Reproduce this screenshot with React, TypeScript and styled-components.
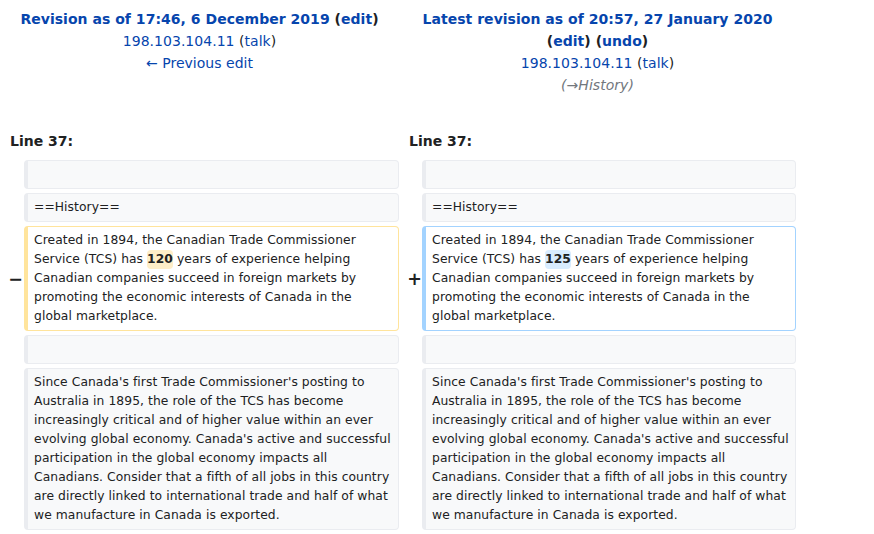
import styled, { createGlobalStyle } from 'styled-components';

const GlobalStyle = createGlobalStyle`
  body {
    margin: 0;
    background: #ffffff;
    font-family: "DejaVu Sans", "Liberation Sans", sans-serif;
    color: #202122;
  }
`;

const Page = styled.div`
  padding-top: 8px;
  width: 796px;
`;

const HeaderRow = styled.div`
  display: grid;
  grid-template-columns: 399px 397px;
`;

const HeaderCell = styled.div`
  text-align: center;
  font-size: 14px;
  line-height: 22px;
  letter-spacing: 0.03px;
`;

const HeaderLine = styled.div<{ $bold?: boolean }>`
  font-weight: ${p => (p.$bold ? 700 : 400)};
`;

const Link = styled.a`
  color: #0645ad;
  text-decoration: none;
`;

const Summary = styled.div`
  font-style: italic;
  color: #72777d;
`;

const LineNoRow = styled.div`
  display: grid;
  grid-template-columns: 399px 397px;
  margin-top: 34px;
  margin-bottom: 8px;
`;

const LineNo = styled.div`
  padding-left: 10px;
  font-size: 14px;
  line-height: 22px;
  font-weight: 700;
`;

const DiffGrid = styled.div`
  display: grid;
  grid-template-columns: 24px 375px 23px 374px;
  row-gap: 4px;
`;

const Marker = styled.div<{ $pad: number }>`
  align-self: center;
  text-align: right;
  padding-right: ${p => p.$pad}px;
  font-size: 17.5px;
  font-weight: 700;
  line-height: 20px;
`;

const borderColors = {
  context: '#eaecf0',
  deleted: '#ffe49c',
  added: '#a3d3ff',
};

const Cell = styled.div<{ $kind: 'context' | 'deleted' | 'added'; $col: number }>`
  grid-column: ${p => p.$col};
  box-sizing: border-box;
  border-style: solid;
  border-width: 1px 1px 1px 4px;
  border-color: ${p => borderColors[p.$kind]};
  border-radius: 4px;
  background: ${p => (p.$kind === 'context' ? '#f8f9fa' : '#ffffff')};
  padding: 4px 5px 4px 6px;
  font-size: 12.32px;
  line-height: 19px;
  letter-spacing: 0.07px;
  min-height: 29px;
  white-space: pre-wrap;
  word-wrap: break-word;
`;

const Change = styled.span<{ $kind: 'deleted' | 'added' }>`
  display: inline-block;
  font-weight: 700;
  border-radius: 4px;
  line-height: 19px;
  background: ${p => (p.$kind === 'deleted' ? '#feeec8' : '#d8ecff')};
`;

const intro = (n: string, kind: 'deleted' | 'added') => (
  <>
    Created in 1894, the Canadian Trade Commissioner Service (TCS) has{' '}
    <Change $kind={kind}>{n}</Change> years of experience helping Canadian companies succeed in
    foreign markets by promoting the economic interests of Canada in the global marketplace.
  </>
);

const since =
  "Since Canada's first Trade Commissioner's posting to Australia in 1895, the role of the TCS has become increasingly critical and of higher value within an ever evolving global economy. Canada's active and successful participation in the global economy impacts all Canadians. Consider that a fifth of all jobs in this country are directly linked to international trade and half of what we manufacture in Canada is exported.";

export default function App() {
  return (
    <Page>
      <GlobalStyle />
      <HeaderRow>
        <HeaderCell>
          <HeaderLine $bold>
            <Link>Revision as of 17:46, 6 December 2019</Link> (<Link>edit</Link>)
          </HeaderLine>
          <HeaderLine>
            <Link>198.103.104.11</Link> (<Link>talk</Link>)
          </HeaderLine>
          <HeaderLine>
            <Link>← Previous edit</Link>
          </HeaderLine>
        </HeaderCell>
        <HeaderCell>
          <HeaderLine $bold>
            <Link>Latest revision as of 20:57, 27 January 2020</Link>
          </HeaderLine>
          <HeaderLine $bold>
            (<Link>edit</Link>) (<Link>undo</Link>)
          </HeaderLine>
          <HeaderLine>
            <Link>198.103.104.11</Link> (<Link>talk</Link>)
          </HeaderLine>
          <Summary>(→History)</Summary>
        </HeaderCell>
      </HeaderRow>

      <LineNoRow>
        <LineNo>Line 37:</LineNo>
        <LineNo>Line 37:</LineNo>
      </LineNoRow>

      <DiffGrid>
        <Cell $kind="context" $col={2} />
        <Cell $kind="context" $col={4} />

        <Cell $kind="context" $col={2}>==History==</Cell>
        <Cell $kind="context" $col={4}>==History==</Cell>

        <Marker $pad={1}>−</Marker>
        <Cell $kind="deleted" $col={2}>{intro('120', 'deleted')}</Cell>
        <Marker $pad={0}>+</Marker>
        <Cell $kind="added" $col={4}>{intro('125', 'added')}</Cell>

        <Cell $kind="context" $col={2} />
        <Cell $kind="context" $col={4} />

        <Cell $kind="context" $col={2}>{since}</Cell>
        <Cell $kind="context" $col={4}>{since}</Cell>
      </DiffGrid>
    </Page>
  );
}
